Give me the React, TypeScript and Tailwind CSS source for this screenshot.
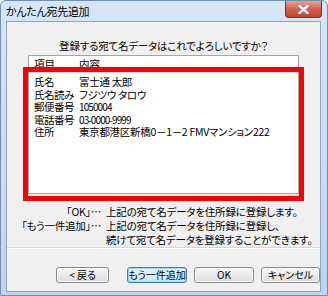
import React from 'react';

const rows: [string, string, boolean?][] = [
    ['氏名', '富士通 太郎'],
    ['氏名読み', 'フジツウ タロウ'],
    ['郵便番号', '1050004', true],
    ['電話番号', '03-0000-9999', true],
    ['住所', '東京都港区新橋0－1－2 FMVマンション222'],
];

const Btn = ({ label, w, primary }: { label: string; w: string; primary?: boolean }) => (
    <button
        className={`${w} h-[16px] rounded-[3px] border text-[10px] leading-none flex items-center justify-center ${
            primary
                ? 'border-[#3c7fb1] bg-gradient-to-b from-[#eaf6fd] to-[#bee6fd] shadow-[inset_0_0_0_1px_#9fd8f7]'
                : 'border-[#8a8a8a] bg-gradient-to-b from-[#f6f6f6] to-[#dddddd] shadow-[inset_0_0_0_1px_#fcfcfc]'
        }`}
    >
        {label}
    </button>
);

export default function App() {
    return (
        <div className="w-[328px] h-[296px] relative rounded-t-[6px] border border-[#6f8fb4] bg-gradient-to-b from-[#d7e6f6] to-[#bfd4ec] font-['Noto_Sans_CJK_JP',sans-serif] text-black [font-feature-settings:'palt'] overflow-hidden">
            {/* title bar */}
            <div className="h-[20px] flex items-center pl-[5px] text-[11px] tracking-[-0.3px]">
                かんたん宛先追加
            </div>
            <div className="absolute right-[5px] top-[0px] w-[37px] h-[17px] rounded-b-[4px] border border-[#8a2b1f] border-t-0 bg-gradient-to-b from-[#e8a493] via-[#d2604b] to-[#c24632] flex items-center justify-center">
                <svg width="11" height="9" viewBox="0 0 11 9">
                    <path d="M1.5 1 L9.5 8 M9.5 1 L1.5 8" stroke="#ffffff" strokeWidth="2.4" strokeLinecap="square" />
                </svg>
            </div>

            {/* client area */}
            <div className="ml-[5px] w-[315px] h-[271px] border border-[#8ea3bd] bg-[#f0f0f0] flex flex-col relative">
                <p className="mt-[17px] h-[14px] leading-[14px] text-[10.5px] text-center tracking-[-0.2px]">
                    登録する宛て名データはこれでよろしいですか？
                </p>

                <div className="mt-[2px] ml-[21px] w-[271px] h-[139px] bg-white border border-[#a5a5a5] flex flex-col text-[10.5px] leading-[12.5px]">
                    <div className="h-[17px] flex items-center pl-[5px] border-b border-[#e3e3e3]">
                        <span className="w-[45px] shrink-0">項目</span>
                        <span>内容</span>
                    </div>
                    <div className="pt-[3px] flex flex-col">
                        {rows.map(([k, v, mono]) => (
                            <div key={k} className="h-[12.5px] flex items-center pl-[5px] whitespace-nowrap">
                                <span className="w-[45px] shrink-0 tracking-[-0.5px]">{k}</span>
                                <span className={mono ? 'tracking-[-0.9px] text-[10px]' : 'tracking-[-0.3px]'}>{v}</span>
                            </div>
                        ))}
                    </div>
                </div>

                {/* explanation */}
                <div className="mt-[11px] flex flex-col text-[10.5px] leading-[14px] whitespace-nowrap tracking-[-0.2px]">
                    <div className="flex">
                        <span className="w-[94px] shrink-0 text-right">「OK」…</span>
                        <span className="ml-[5px]">上記の宛て名データを住所録に登録します。</span>
                    </div>
                    <div className="flex">
                        <span className="w-[94px] shrink-0 text-right">「もう一件追加」…</span>
                        <span className="ml-[5px]">上記の宛て名データを住所録に登録し、</span>
                    </div>
                    <div className="flex">
                        <span className="w-[94px] shrink-0"></span>
                        <span className="ml-[5px]">続けて宛て名データを登録することができます。</span>
                    </div>
                </div>

                <div className="h-px bg-[#d5d5d5] border-b border-white box-content"></div>

                <div className="mt-[18px] flex pl-[49px] gap-[7px]">
                    <Btn label="< 戻る" w="w-[54px]" />
                    <span className="w-[4px]"></span>
                    <Btn label="もう一件追加" w="w-[61px]" primary />
                    <Btn label="OK" w="w-[61px]" />
                    <Btn label="キャンセル" w="w-[60px]" />
                </div>

                {/* red highlight */}
                <div className="absolute left-[16px] top-[45px] w-[281px] h-[134px] border-[5px] border-[#ff0000]"></div>
            </div>
        </div>
    );
}
